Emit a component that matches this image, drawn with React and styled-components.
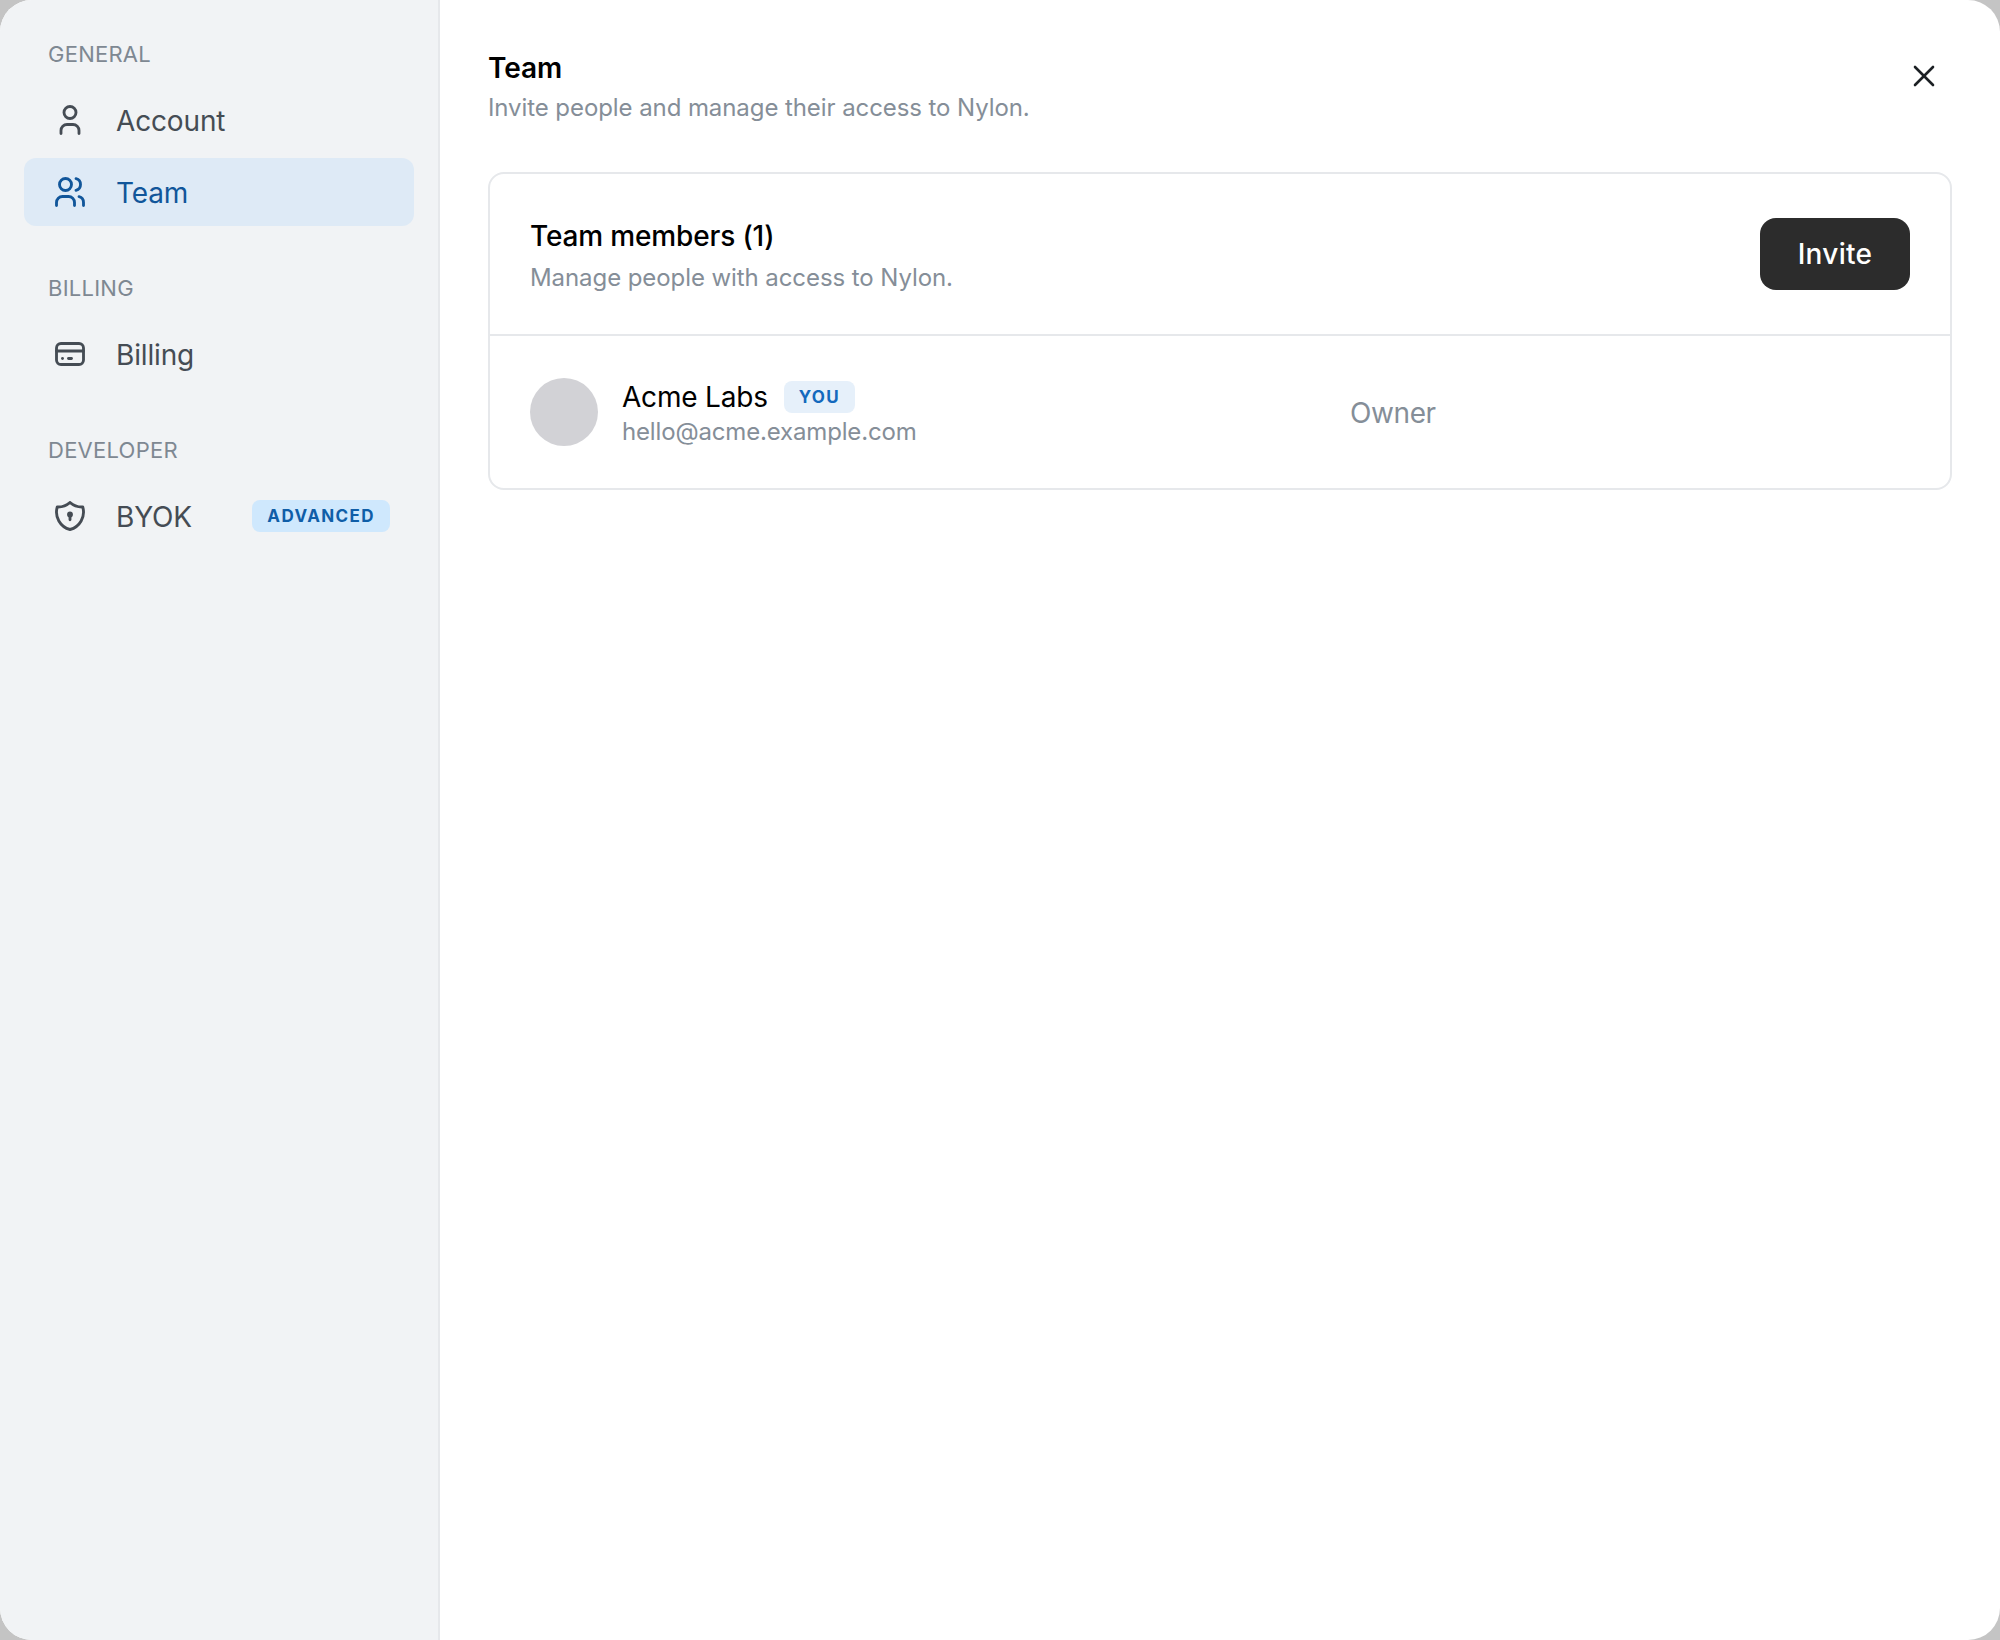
import React from "react";
import styled, { createGlobalStyle } from "styled-components";

const Global = createGlobalStyle`
  html, body { margin: 0; padding: 0; background: #c4c4c4; }
  * { box-sizing: border-box; }
  body { font-family: Inter, "Liberation Sans", sans-serif; -webkit-font-smoothing: antialiased; }
`;
const Modal = styled.div`
  width: 2000px; height: 1640px; background: #fff; border-radius: 32px; overflow: hidden; display: flex;
`;
const Sidebar = styled.aside`
  width: 440px; flex: none; background: #f1f3f5; border-right: 2px solid #e6e8eb; padding: 40px 24px;
  display: flex; flex-direction: column; gap: 48px;
`;
const Section = styled.section`
  display: flex; flex-direction: column; gap: 4px;
`;
const SectionLabel = styled.div`
  font-size: 22px; line-height: 28px; color: #7e8892; padding: 0 24px; height: 28px; margin-bottom: 14px;
  text-transform: uppercase; letter-spacing: 0.25px;
`;
const NavItem = styled.div`
  height: 68px; border-radius: 12px; display: flex; align-items: center; gap: 28px; padding: 0 24px 0 28px;
  font-size: 28px; letter-spacing: -0.15px; color: ${p => (p.$active ? "#11569a" : "#454c54")};
  background: ${p => (p.$active ? "#deeaf6" : "transparent")};
  & > svg { flex: none; }
`;
const NavLabel = styled.span`
  flex: 1; padding-top: 2px;
`;
const AdvancedBadge = styled.span`
  background: #cfe8fd; color: #0f5ea8; font-size: 17px; font-weight: 700; letter-spacing: 1.4px; height: 32px; line-height: 32px;
  border-radius: 8px; padding: 0 15px;
`;
const Main = styled.main`
  flex: 1; min-width: 0; padding: 48px 48px 0; position: relative;
`;
const Title = styled.h1`
  margin: 0 0 2px; font-size: 28px; font-weight: 600; line-height: 40px; color: #000; letter-spacing: -0.1px;
`;
const Subtitle = styled.p`
  margin: 0; font-size: 24px; line-height: 36px; color: #858e98; letter-spacing: -0.08px;
`;
const CloseButton = styled.button`
  position: absolute; top: 58px; right: 58px; width: 36px; height: 36px; padding: 0; border: 0; background: none; color: #1c2024;
  display: flex; align-items: center; justify-content: center;
`;
const Card = styled.div`
  margin-top: 46px; border: 2px solid #e6e8eb; border-radius: 16px;
`;
const CardHeader = styled.div`
  display: flex; align-items: center; justify-content: space-between; height: 162px; padding: 0 40px; border-bottom: 2px solid #e6e8eb;
`;
const CardTitle = styled.div`
  font-size: 28px; font-weight: 500; line-height: 48px; color: #000; letter-spacing: -0.15px;
`;
const Invite = styled.button`
  width: 150px; height: 72px; border: 0; border-radius: 16px; background: #2c2c2c; color: #fff;
  font: 500 28px Inter, sans-serif; letter-spacing: 0.3px;
`;
const MemberRow = styled.div`
  display: flex; align-items: center; height: 152px; padding: 0 40px; gap: 24px;
`;
const Avatar = styled.div`
  width: 68px; height: 68px; border-radius: 50%; background: #d2d2d6; flex: none;
`;
const MemberInfo = styled.div`
  width: 704px; flex: none; padding-top: 3px;
`;
const NameLine = styled.div`
  display: flex; align-items: center; gap: 16px; font-size: 28px; line-height: 36px; color: #000; letter-spacing: -0.2px;
`;
const YouBadge = styled.span`
  background: #e6f0fa; color: #1469bd; font-size: 17px; font-weight: 700; letter-spacing: 1.4px; height: 32px; line-height: 32px;
  border-radius: 8px; padding: 0 15px;
`;
const Email = styled.div`
  font-size: 24px; line-height: 34px; color: #858e98; letter-spacing: -0.16px;
`;
const Role = styled.div`
  font-size: 28px; color: #858e98; letter-spacing: -0.4px; padding-top: 2px;
`;

const Ico = ({ children, width = 1.9 }) => (
  <svg width="36" height="36" viewBox="0 0 24 24" fill="none" stroke="currentColor" strokeWidth={width} strokeLinecap="round" strokeLinejoin="round">
    {children}
  </svg>
);

export default function App() {
  return (
    <>
      <Global />
      <Modal>
        <Sidebar>
          <Section>
            <SectionLabel>General</SectionLabel>
            <NavItem>
              <Ico><path d="M8 7a4 4 0 1 0 8 0a4 4 0 0 0 -8 0" /><path d="M6 21v-2a4 4 0 0 1 4 -4h4a4 4 0 0 1 4 4v2" /></Ico>
              <NavLabel>Account</NavLabel>
            </NavItem>
            <NavItem $active>
              <Ico><path d="M5 7a4 4 0 1 0 8 0a4 4 0 0 0 -8 0" /><path d="M3 21v-2a4 4 0 0 1 4 -4h4a4 4 0 0 1 4 4v2" /><path d="M16 3.130a4 4 0 0 1 0 7.750" /><path d="M21 21v-2a4 4 0 0 0 -3 -3.850" /></Ico>
              <NavLabel>Team</NavLabel>
            </NavItem>
          </Section>
          <Section>
            <SectionLabel>Billing</SectionLabel>
            <NavItem>
              <Ico><path d="M3 8a3 3 0 0 1 3 -3h12a3 3 0 0 1 3 3v8a3 3 0 0 1 -3 3h-12a3 3 0 0 1 -3 -3z" /><path d="M3 10l18 0" /><path d="M7 15l.01 0" /><path d="M11 15l2 0" /></Ico>
              <NavLabel>Billing</NavLabel>
            </NavItem>
          </Section>
          <Section>
            <SectionLabel>Developer</SectionLabel>
            <NavItem>
              <Ico><path d="M12 3a12 12 0 0 0 8.500 3a12 12 0 0 1 -8.500 15a12 12 0 0 1 -8.500 -15a12 12 0 0 0 8.500 -3" /><path d="M12 11m-1 0a1 1 0 1 0 2 0a1 1 0 1 0 -2 0" /><path d="M12 12l0 2.500" /></Ico>
              <NavLabel>BYOK</NavLabel>
              <AdvancedBadge>ADVANCED</AdvancedBadge>
            </NavItem>
          </Section>
        </Sidebar>
        <Main>
          <Title>Team</Title>
          <Subtitle>Invite people and manage their access to Nylon.</Subtitle>
          <CloseButton aria-label="Close">
            <Ico width={1.75}><path d="M18 6l-12 12" /><path d="M6 6l12 12" /></Ico>
          </CloseButton>
          <Card>
            <CardHeader>
              <div>
                <CardTitle>Team members (1)</CardTitle>
                <Subtitle>Manage people with access to Nylon.</Subtitle>
              </div>
              <Invite>Invite</Invite>
            </CardHeader>
            <MemberRow>
              <Avatar />
              <MemberInfo>
                <NameLine>Acme Labs<YouBadge>YOU</YouBadge></NameLine>
                <Email>hello@acme.example.com</Email>
              </MemberInfo>
              <Role>Owner</Role>
            </MemberRow>
          </Card>
        </Main>
      </Modal>
    </>
  );
}
